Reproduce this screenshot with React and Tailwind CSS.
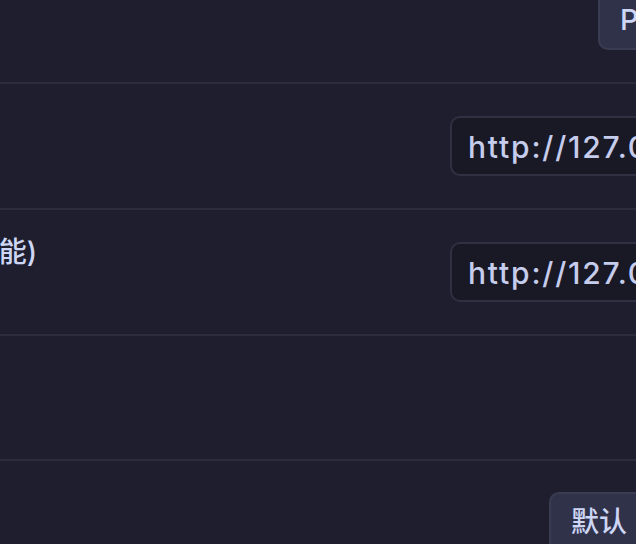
import React from 'react';

const font = { fontFamily: '"Inter", "Noto Sans CJK SC", sans-serif' };

function Divider() {
  return <div className="h-[2px] w-full shrink-0 bg-[#2c2c3d]"></div>;
}

function UrlInput({ value }) {
  return (
    <div className="h-[60px] w-[320px] shrink-0 flex items-center rounded-[10px] border-2 border-[#2f3042] bg-[#191926] pl-[16px] pt-[3px] text-[30px] font-medium tracking-[1.8px] text-[#c6cdec] whitespace-nowrap overflow-hidden">
      {value}
    </div>
  );
}

export default function App() {
  return (
    <div
      className="w-[636px] h-[544px] overflow-hidden bg-[#1e1e2e] flex flex-col"
      style={font}
    >
      {/* top row: button partly above the window */}
      <div className="h-[82px] shrink-0 flex items-end pb-[32px]">
        <div className="w-[598px] shrink-0"></div>
        <button className="h-[60px] shrink-0 rounded-[10px] border-2 border-[#3a3c52] bg-[#30324a] pl-[20px] pr-[20px] text-[29px] font-medium text-[#cdd6f4] whitespace-nowrap">
          Proxy
        </button>
      </div>
      <Divider />

      {/* server address */}
      <div className="h-[124px] shrink-0 flex items-center">
        <div className="w-[450px] shrink-0"></div>
        <UrlInput value="http://127.0.0.1:8080" />
      </div>
      <Divider />

      {/* experimental address */}
      <div className="h-[124px] shrink-0 flex items-center">
        <div className="w-[450px] shrink-0 self-start pt-[24px]">
          <div className="w-[37px] overflow-hidden flex justify-end">
            <span className="text-[28px] leading-[36px] font-medium text-[#cdd6f4] whitespace-nowrap">
              (实验功能)
            </span>
          </div>
        </div>
        <UrlInput value="http://127.0.0.1:5000" />
      </div>
      <Divider />

      <div className="h-[123px] shrink-0"></div>
      <Divider />

      {/* reset row */}
      <div className="flex-1 flex items-start pt-[31px]">
        <div className="w-[549px] shrink-0"></div>
        <button className="h-[60px] shrink-0 rounded-[10px] border-2 border-[#3a3c52] bg-[#30324a] pl-[20px] pr-[22px] text-[28px] font-medium text-[#cdd6f4] whitespace-nowrap">
          默认
        </button>
      </div>
    </div>
  );
}
